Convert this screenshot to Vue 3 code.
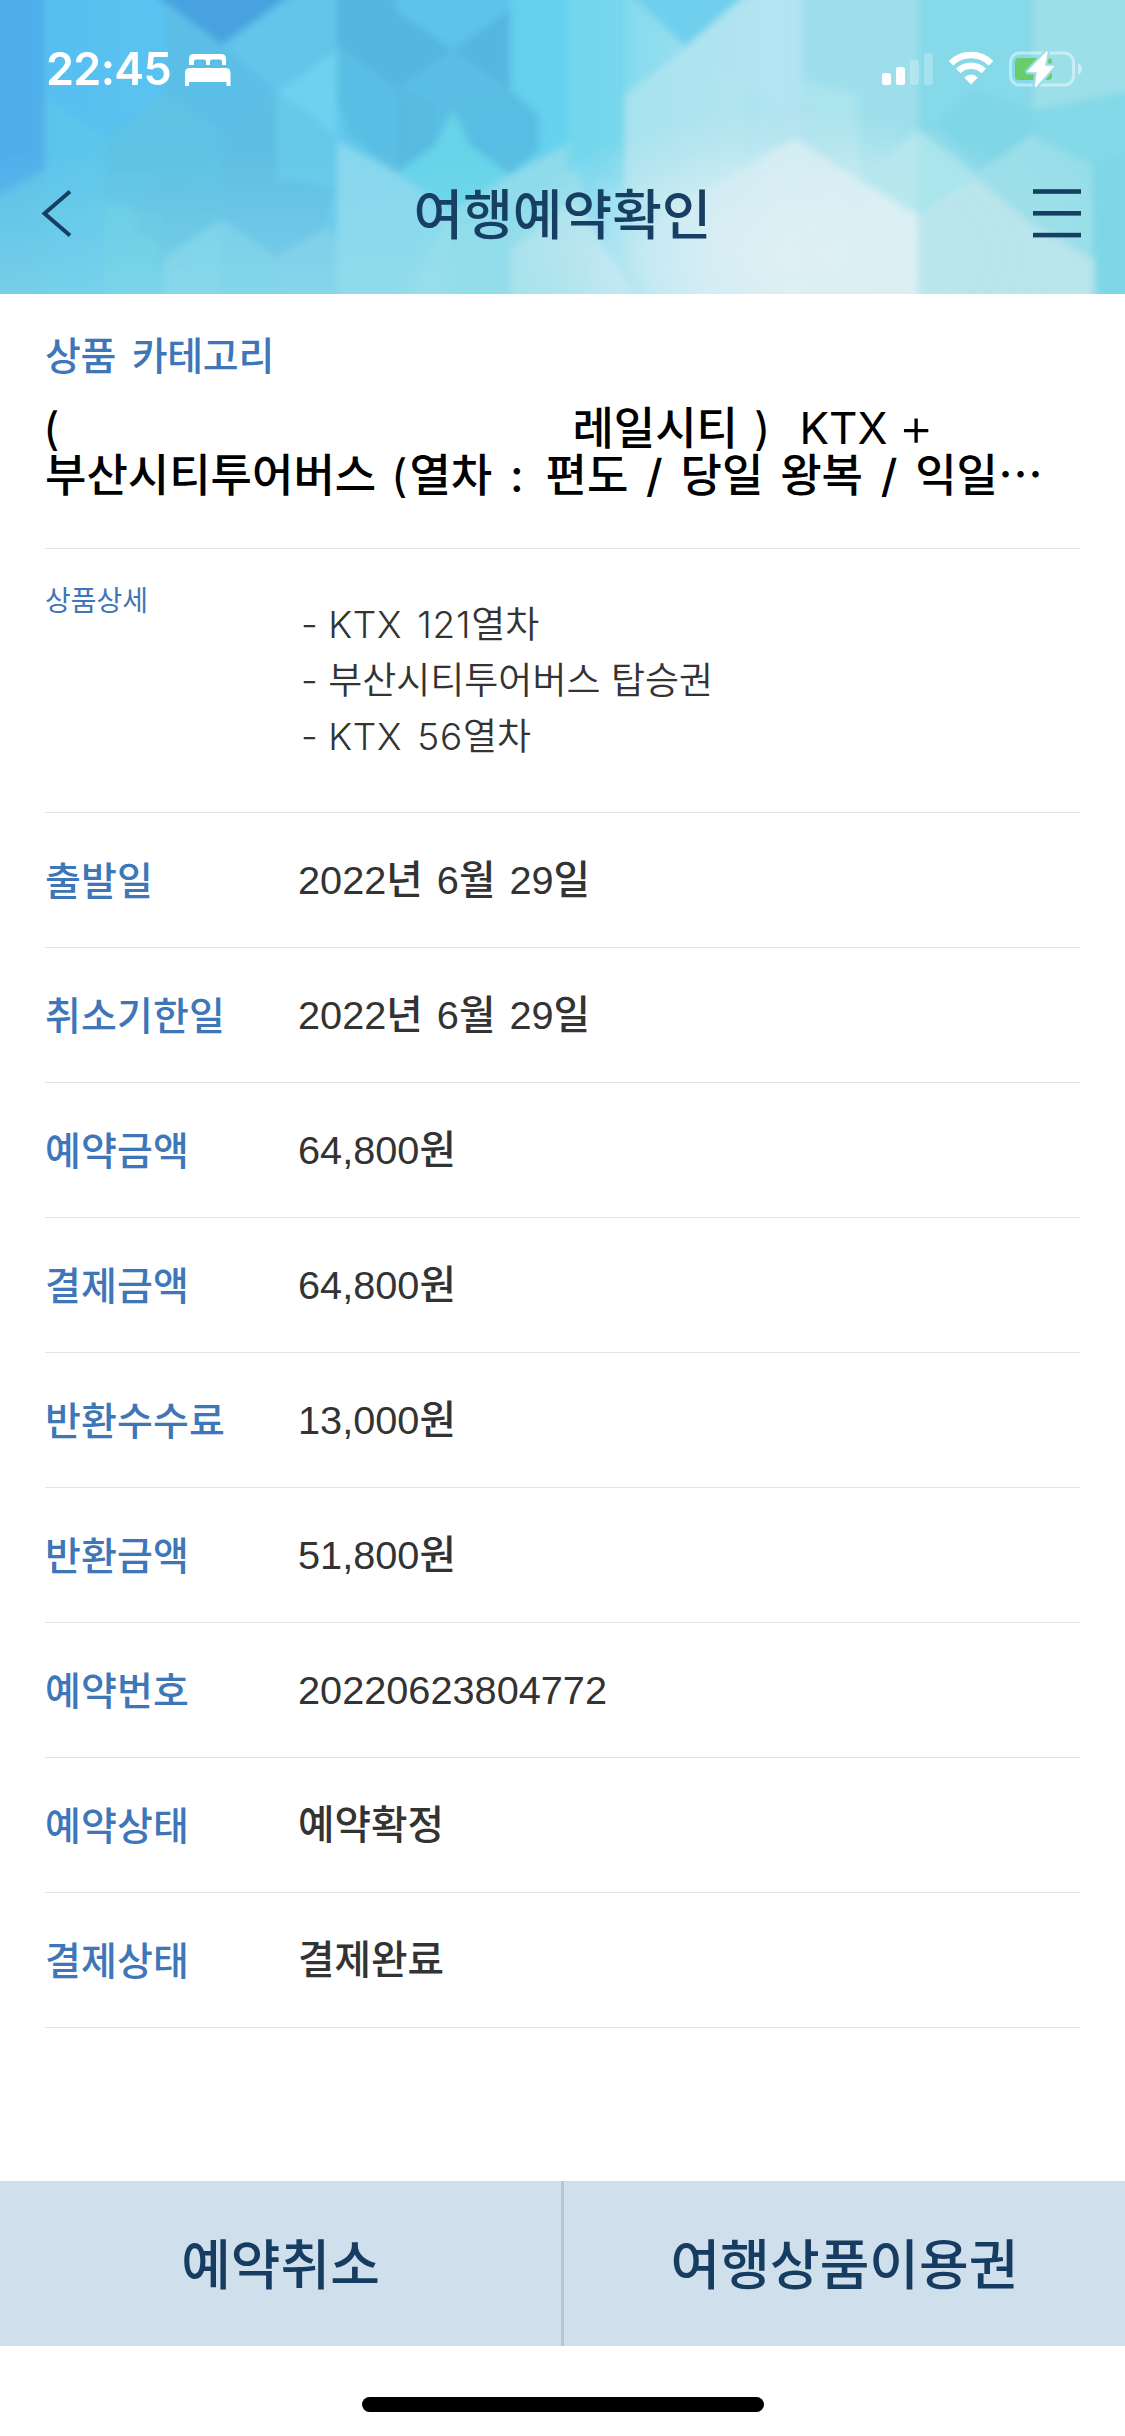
<template>
  <div class="screen">
    <header class="top">
      <svg class="top-bg" viewBox="0 0 1125 294" preserveAspectRatio="none" aria-hidden="true">
        <defs>
          <linearGradient id="base" x1="0" y1="0" x2="1" y2="0">
            <stop offset="0" stop-color="#50aeea" />
            <stop offset="0.12" stop-color="#5cc2ec" />
            <stop offset="0.35" stop-color="#62c9ec" />
            <stop offset="0.5" stop-color="#66d2f0" />
            <stop offset="0.57" stop-color="#8adcee" />
            <stop offset="0.68" stop-color="#b0e4f0" />
            <stop offset="0.8" stop-color="#98deea" />
            <stop offset="1" stop-color="#92dde8" />
          </linearGradient>
          <linearGradient id="fade" x1="0" y1="0" x2="0" y2="1">
            <stop offset="0.5" stop-color="#9be2ea" stop-opacity="0" />
            <stop offset="1" stop-color="#9be2ea" stop-opacity="0.45" />
          </linearGradient>
          <linearGradient id="mist" x1="0" y1="0" x2="1" y2="0">
            <stop offset="0" stop-color="#d3ecf3" stop-opacity="0" />
            <stop offset="0.5" stop-color="#dbeef4" />
            <stop offset="1" stop-color="#e0f0f4" />
          </linearGradient>
          <radialGradient id="glow">
            <stop offset="0" stop-color="#e9f2f5" />
            <stop offset="0.5" stop-color="#dceff4" stop-opacity="0.75" />
            <stop offset="1" stop-color="#c4e9f0" stop-opacity="0" />
          </radialGradient>
          <filter id="soft" x="-5%" y="-5%" width="110%" height="110%">
            <feGaussianBlur stdDeviation="3.5" />
          </filter>
        </defs>
        <rect width="1125" height="294" fill="url(#base)" />
        <g filter="url(#soft)">
          <polygon v-for="(s, i) in shapes" :key="i" :points="s[0]" :fill="s[1]" :opacity="s[2]" />
          <rect x="-10" y="0" width="600" height="304" fill="url(#fade)" />
        </g>
        <ellipse cx="790" cy="255" rx="290" ry="150" fill="url(#glow)" opacity="0.9" />
        <g filter="url(#soft)">
          <polygon v-for="(s, i) in overShapes" :key="i" :points="s[0]" :fill="s[1]" :opacity="s[2]" />
        </g>
      </svg>
      <div class="status-bar">
        <div class="status-left">
          <span class="time">22:45</span>
          <svg class="bed" width="46" height="32" viewBox="0 0 46 32" fill="#fff">
            <path d="M4 11V5q0-5 5-5h27q5 0 5 5v6h-4V7.500q0-2-2-2h-8q-2 0-2 2V11h-4V7.500q0-2-2-2h-8q-2 0-2 2V11z" />
            <path d="M0 32V19q0-5 5-5h35.500q5 0 5 5v13h-4v-4H4v4z" />
          </svg>
        </div>
        <div class="status-right">
          <svg width="51" height="33" viewBox="0 0 51 33" fill="#fff">
            <rect x="0" y="21" width="9" height="12" rx="2.500" />
            <rect x="14" y="15" width="9" height="18" rx="2.500" />
            <rect x="28" y="8" width="9" height="25" rx="2.500" opacity="0.25" />
            <rect x="42" y="1" width="9" height="32" rx="2.500" opacity="0.25" />
          </svg>
          <svg width="46" height="34" viewBox="0 0 46 34">
            <path d="M3 12.300a28.500 28.500 0 0 1 40 0" fill="none" stroke="#fff" stroke-width="6.500" />
            <path d="M10.200 19.800a18.500 18.500 0 0 1 25.600 0" fill="none" stroke="#fff" stroke-width="6.500" />
            <path d="M23 33.500l-6.800-7q6.800-5.800 13.600 0z" fill="#fff" />
          </svg>
          <svg width="74" height="36" viewBox="0 0 74 36">
            <defs>
              <mask id="boltMask">
                <rect width="74" height="36" fill="#fff" />
                <path :d="bolt" fill="#000" stroke="#000" stroke-width="6" stroke-linejoin="round" />
              </mask>
            </defs>
            <g mask="url(#boltMask)">
              <rect x="1.500" y="2" width="63" height="32" rx="9" fill="none" stroke="#fff" stroke-width="3" opacity="0.45" />
              <rect x="6" y="7" width="37" height="22" rx="4" fill="#69cc68" />
            </g>
            <path d="M69 12.500q4 1.500 4 5.500t-4 5.500z" fill="#fff" opacity="0.5" />
            <path :d="bolt" fill="#fff" stroke="#fff" stroke-width="1.500" stroke-linejoin="round" />
          </svg>
        </div>
      </div>
      <div class="nav-bar">
        <button class="nav-btn" aria-label="뒤로">
          <svg width="32" height="50" viewBox="0 0 32 50">
            <path d="M29 3.500L3.500 25.500L29 47.500" fill="none" stroke="#173e63" stroke-width="4" />
          </svg>
        </button>
        <h1>여행예약확인</h1>
        <button class="nav-btn" aria-label="메뉴">
          <svg width="48" height="50" viewBox="0 0 48 50" fill="#173e63">
            <rect y="1.200" width="48" height="4.600" />
            <rect y="23" width="48" height="4.600" />
            <rect y="44.800" width="48" height="4.600" />
          </svg>
        </button>
      </div>
    </header>

    <main class="content">
      <section class="product">
        <h2>상품 카테고리</h2>
        <p class="name">
          <span class="line"><span class="thin open">(</span><i class="gap"></i>레일시티<span class="thin close">)</span><span class="ktx">KTX</span><span class="plus">+</span></span>
          <span class="line second">부산시티투어버스 <span class="thin open">(</span>열차 <span class="colon">:</span> 편도 <span class="slash">/</span> 당일 왕복 <span class="slash">/</span> 익일<span class="dots">⋯</span></span>
        </p>
      </section>

      <section class="detail">
        <span class="detail-label">상품상세</span>
        <ul>
          <li v-for="item in details" :key="item.latin + item.text">
            - <span class="latin">{{ item.latin }}</span>{{ item.text }}
          </li>
        </ul>
      </section>

      <dl class="rows">
        <div v-for="row in rows" :key="row.label" class="row">
          <dt>{{ row.label }}</dt>
          <dd>{{ row.value }}</dd>
        </div>
      </dl>
    </main>

    <footer class="actions">
      <button>예약취소</button>
      <button>여행상품이용권</button>
    </footer>
    <div class="home-area">
      <div class="home-indicator"></div>
    </div>
  </div>
</template>

<script setup>
const bolt = 'M38 1L19 20.500h9.500L26.500 35.500L44 15.500h-9z';

const details = [
  { latin: 'KTX 121', text: '열차' },
  { latin: '', text: '부산시티투어버스 탑승권' },
  { latin: 'KTX 56', text: '열차' }
];

const rows = [
  { label: '출발일', value: '2022년 6월 29일' },
  { label: '취소기한일', value: '2022년 6월 29일' },
  { label: '예약금액', value: '64,800원' },
  { label: '결제금액', value: '64,800원' },
  { label: '반환수수료', value: '13,000원' },
  { label: '반환금액', value: '51,800원' },
  { label: '예약번호', value: '20220623804772' },
  { label: '예약상태', value: '예약확정' },
  { label: '결제상태', value: '결제완료' }
];

// [points, fill, opacity]
const shapes = [
  ['-10,-10 45,-10 45,170 -10,210', '#50aeea', 0.8],
  ['45,-10 163,-10 165,88 105,138 45,98', '#59c2f1', 0.8],
  ['45,98 105,138 105,304 45,304', '#5fcbea', 0.7],
  ['-10,200 45,170 45,304 -10,304', '#5fc8e6', 0.7],
  ['148,-10 300,-10 222,45', '#4aa2df', 1],
  ['165,8 222,45 275,92 222,135 105,138 165,90', '#5bbee5', 0.9],
  ['222,45 290,-5 337,-10 337,50 277,92', '#62c4e9', 0.8],
  ['277,92 337,50 337,140 318,120', '#6fd3f0', 0.9],
  ['105,138 165,90 222,130 222,220 165,255 160,304 105,304', '#5ec2e4', 0.9],
  ['105,200 160,215 160,304 105,304', '#68d0e6', 0.6],
  ['222,130 277,92 277,175 335,190 325,228 277,257 222,218', '#60bee4', 0.95],
  ['277,92 320,120 337,160 337,185 277,180', '#66c9e9', 0.9],
  ['135,205 165,180 222,190 222,218 165,252 135,230', '#62c0de', 0.5],
  ['165,257 222,220 222,304 160,304', '#84d6e8', 0.7],
  ['222,220 277,257 277,304 222,304', '#76cce7', 0.9],
  ['277,257 325,228 337,240 337,304 277,304', '#7acbea', 0.9],
  ['337,140 397,173 453,212 453,304 337,304', '#8cd8ed', 0.9],
  ['337,-10 395,-10 453,50 510,10 510,90 538,115 538,150 510,175 470,145 453,110 435,145 397,173 350,135 337,100', '#5abce2', 0.9],
  ['337,-10 395,-10 453,50 397,88 337,45', '#52b0dc', 0.6],
  ['453,50 510,10 510,90', '#52b0dc', 0.6],
  ['397,88 435,105 435,145 397,173', '#55b8de', 0.5],
  ['470,105 510,92 538,115 538,150 510,175 470,145', '#55bbe0', 0.5],
  ['395,-10 510,-10 510,10 453,50 395,10', '#5bc3ea', 1],
  ['397,173 435,145 453,110 470,145 510,175 450,212', '#66d4e8', 0.9],
  ['450,212 510,175 575,140 600,304 400,304', '#94dcea', 0.85],
  ['510,250 575,200 640,304 510,304', '#b8e5ef', 0.8],
  ['625,-10 750,-10 685,46', '#70cfec', 1],
  ['566,-10 625,-10 625,190 566,170', '#74d6ec', 0.7],
  ['625,95 685,48 745,88 745,260 625,190', '#b5e6ef', 0.7],
  ['685,48 760,-10 802,-10 802,140 745,88', '#b3e4f1', 0.8],
  ['802,-10 918,-10 918,130 860,175 802,115', '#9cdfeb', 0.9],
  ['802,80 858,95 860,175 805,125', '#b0e5ee', 0.7],
  ['918,-10 1033,-10 1033,135 975,175 918,130', '#85d8e8', 0.95],
  ['937,120 975,90 1033,110 1033,135 975,175', '#79d3e6', 0.6],
  ['1033,-10 1135,-10 1135,90 1033,110', '#9cdfe8', 0.9],
  ['1033,110 1135,90 1135,304 1095,304 1095,200 1033,140', '#82d8e8', 0.9]
];

const overShapes = [
  ['860,180 918,132 975,175 918,215', '#b3e6ed', 0.9],
  ['795,138 860,180 918,215 918,310 620,310 620,240', 'url(#mist)', 0.75],
  ['860,178 918,130 918,215', '#b8e7ee', 0.9],
  ['918,130 975,175 918,215', '#a8e3ec', 0.9],
  ['918,215 975,177 1033,225 1095,260 1095,310 918,310', '#bae5ec', 0.95],
  ['975,177 1033,135 1092,165 1092,255 1033,225', '#9cdee8', 0.8],
  ['1092,165 1135,150 1135,310 1095,310', '#7dd6e7', 0.9]
];
</script>

<style>
body {
  background: #fff;
}
</style>

<style scoped>
.screen {
  width: 1125px;
  height: 2436px;
  display: flex;
  flex-direction: column;
  overflow: hidden;
  background: #fff;
  color: #333;
  font-family: 'Liberation Sans', 'Noto Sans CJK KR', sans-serif;
}

button {
  margin: 0;
  padding: 0;
  border: none;
  background: none;
  font: inherit;
  color: inherit;
}

h1,
h2,
p,
ul,
dl,
dd {
  margin: 0;
  padding: 0;
}

/* 상단 헤더 */
.top {
  position: relative;
  flex: none;
  height: 294px;
  overflow: hidden;
}

.top-bg {
  position: absolute;
  inset: 0;
  width: 100%;
  height: 100%;
}

.status-bar {
  position: relative;
  display: flex;
  justify-content: space-between;
  height: 132px;
  padding: 51px 42px 0 46px;
  box-sizing: border-box;
}

.status-left {
  display: flex;
  align-items: flex-start;
}

.time {
  width: 139px;
  font-family: Inter, sans-serif;
  font-size: 45px;
  font-weight: 600;
  line-height: 36px;
  letter-spacing: -0.7px;
  color: #fff;
}

.bed {
  margin-top: 3px;
}

.status-right {
  display: flex;
  align-items: flex-start;
  gap: 15px;
}

.status-right svg:first-child {
  margin-top: 1px;
}

.nav-bar {
  position: relative;
  display: flex;
  align-items: center;
  justify-content: space-between;
  height: 162px;
  padding: 0 44px 0 41px;
}

.nav-btn {
  display: flex;
  width: 48px;
}

h1 {
  padding: 5px 0 0 3px;
  font-size: 54px;
  font-weight: 500;
  line-height: 80px;
  color: #173e63;
}

/* 상품 정보 */
.content {
  flex: 1;
  padding: 0 45px;
}

.product {
  height: 255px;
  padding-top: 38px;
  box-sizing: border-box;
  border-bottom: 1px solid #e3e3e3;
}

.product h2 {
  font-size: 39px;
  font-weight: 500;
  line-height: 50px;
  letter-spacing: -0.3px;
  word-spacing: 5px;
  color: #3e76b8;
}

.name {
  padding-top: 23px;
  font-family: Inter, 'Noto Sans CJK KR', sans-serif;
  font-size: 45px;
  font-weight: 500;
  color: #000;
}

.line {
  display: flex;
  height: 47px;
  line-height: 47px;
  white-space: pre;
}

.thin {
  font-weight: 400;
}

.open {
  margin: 0 2px 0 -2px;
}

.gap {
  width: 511px;
}

.close {
  margin-left: 16px;
}

.ktx {
  margin-left: 29px;
  font-weight: 400;
  font-size: 44px;
}

.plus {
  margin-left: 11px;
  font-weight: 300;
  font-size: 54px;
  line-height: 43px;
}

.second {
  display: block;
  word-spacing: 4.800px;
}

.colon {
  margin: 0 5px 0 1px;
}

.slash {
  margin: 0 1px;
}

.detail {
  display: flex;
  height: 264px;
  box-sizing: border-box;
  border-bottom: 1px solid #e3e3e3;
}

.detail-label {
  width: 256px;
  padding-top: 33px;
  font-size: 28px;
  line-height: 40px;
  color: #3e76b8;
}

.detail ul {
  padding-top: 48px;
  list-style: none;
  font-family: Inter, 'Noto Sans CJK KR', sans-serif;
  font-size: 37px;
  font-weight: 350;
  line-height: 56px;
}

.latin {
  letter-spacing: 0.7px;
  word-spacing: 4px;
}

.row {
  display: flex;
  align-items: center;
  height: 135px;
  box-sizing: border-box;
  border-bottom: 1px solid #e3e3e3;
}

.row dt {
  width: 253px;
  padding-top: 3px;
  font-size: 39px;
  font-weight: 500;
  line-height: 46px;
  letter-spacing: 0.1px;
  color: #3e76b8;
}

.row dd {
  font-size: 39.7px;
  font-weight: 500;
  line-height: 46px;
  word-spacing: 3px;
}

/* 하단 버튼 */
.actions {
  flex: none;
  display: flex;
  height: 165px;
  background: #cfdfeb;
}

.actions button {
  flex: 1;
  padding-bottom: 4px;
  font-size: 54px;
  font-weight: 500;
  color: #173c62;
}

.actions button + button {
  border-left: 3px solid #b5c5d5;
}

.home-area {
  flex: none;
  display: flex;
  justify-content: center;
  height: 90px;
  padding-top: 51px;
  box-sizing: border-box;
}

.home-indicator {
  width: 402px;
  height: 15px;
  border-radius: 8px;
  background: #000;
}
</style>
